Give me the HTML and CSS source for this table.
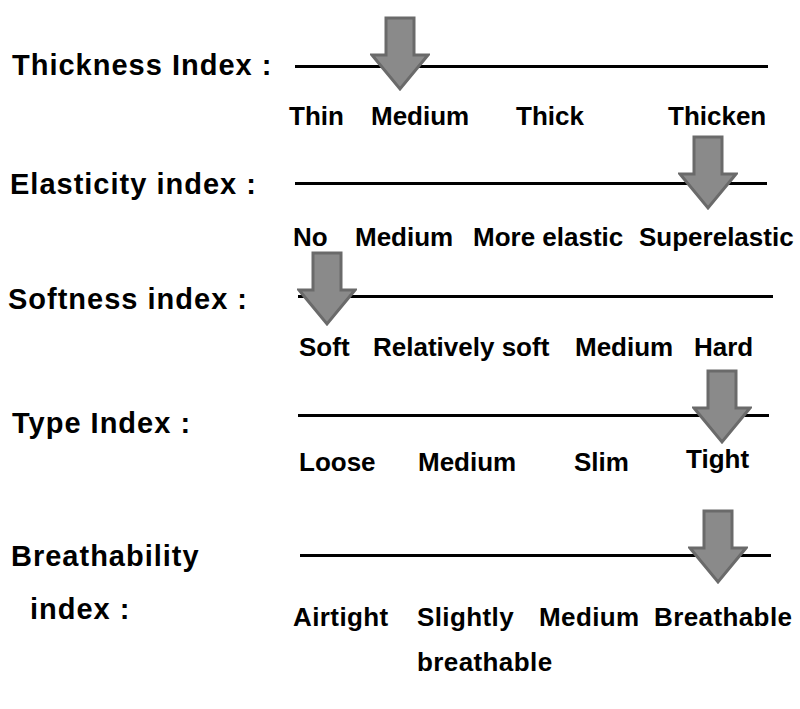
FILE: index.html
```html
<!DOCTYPE html>
<html lang="en">
<head>
<meta charset="utf-8">
<title>Fabric Index</title>
<link rel="stylesheet" href="styles.css">
</head>
<body>
<svg width="0" height="0" class="defs" aria-hidden="true">
  <symbol id="arrow" viewBox="0 0 60 76">
    <path d="M16 2 H44 V39 H58 L30 73 L2 39 H16 Z" fill="#8a8a8a" stroke="#6a6a6a" stroke-width="3" stroke-linejoin="miter"/>
  </symbol>
</svg>
<main class="chart">
  <section class="sec sec-thick">
    <div class="title">Thickness Index :</div>
    <div class="track">
      <div class="line"></div>
      <svg class="arrow"><use href="#arrow"/></svg>
    </div>
    <div class="opts">
      <span>Thin</span><span>Medium</span><span>Thick</span><span>Thicken</span>
    </div>
  </section>

  <section class="sec sec-elastic">
    <div class="title">Elasticity index :</div>
    <div class="track">
      <div class="line"></div>
      <svg class="arrow"><use href="#arrow"/></svg>
    </div>
    <div class="opts">
      <span>No</span><span>Medium</span><span>More elastic</span><span>Superelastic</span>
    </div>
  </section>

  <section class="sec sec-soft">
    <div class="title">Softness index :</div>
    <div class="track">
      <div class="line"></div>
      <svg class="arrow"><use href="#arrow"/></svg>
    </div>
    <div class="opts">
      <span>Soft</span><span>Relatively soft</span><span>Medium</span><span>Hard</span>
    </div>
  </section>

  <section class="sec sec-type">
    <div class="title">Type Index :</div>
    <div class="track">
      <div class="line"></div>
      <svg class="arrow"><use href="#arrow"/></svg>
    </div>
    <div class="opts">
      <span>Loose</span><span>Medium</span><span>Slim</span><span class="raised">Tight</span>
    </div>
  </section>

  <section class="sec sec-breath">
    <div class="title">
      <div class="t1">Breathability</div>
      <div class="t2">index :</div>
    </div>
    <div class="track">
      <div class="line"></div>
      <svg class="arrow"><use href="#arrow"/></svg>
    </div>
    <div class="opts">
      <span>Airtight</span><span>Slightly<br>breathable</span><span>Medium</span><span>Breathable</span>
    </div>
  </section>
</main>
</body>
</html>
```

FILE: styles.css
```css
html, body {
  margin: 0;
  padding: 0;
  background: #ffffff;
}

body {
  width: 800px;
  height: 709px;
  overflow: hidden;
  font-family: "Liberation Sans", Arial, sans-serif;
  font-weight: bold;
  color: #000;
}

.defs {
  position: absolute;
}

.chart {
  display: flex;
  flex-direction: column;
  padding-top: 41px;
}

.sec {
  display: grid;
  grid-template-columns: 285px 1fr;
  grid-template-rows: 50px auto;
}

.title {
  grid-column: 1;
  grid-row: 1;
  align-self: start;
  margin-top: 9px;
  font-size: 29px;
  line-height: 32px;
  letter-spacing: 1px;
  white-space: nowrap;
}

.track {
  grid-column: 2;
  grid-row: 1;
  position: relative;
  display: flex;
  align-items: center;
}

.line {
  height: 3px;
  background: #000;
  margin-left: 10px;
  width: 473px;
}

.arrow {
  position: absolute;
  width: 60px;
  height: 76px;
  top: -23px;
  left: 0;
}

.opts {
  grid-column: 2;
  grid-row: 2;
  display: grid;
  font-size: 26px;
  line-height: 30px;
  white-space: nowrap;
}

/* Thickness */
.sec-thick .title { margin-top: 8px; padding-left: 12px; }
.sec-thick .arrow { top: -25px; left: 85px; }
.sec-thick .opts {
  margin-top: 9.5px;
  padding-left: 4px;
  grid-template-columns: 82px 145px 152px auto;
}

/* Elasticity */
.sec-elastic { margin-top: 27.5px; }
.sec-elastic .title { margin-top: 10px; padding-left: 10px; }
.sec-elastic .line { width: 472px; }
.sec-elastic .arrow { top: -23px; left: 393px; }
.sec-elastic .opts {
  margin-top: 13.5px;
  padding-left: 8px;
  grid-template-columns: 62px 118px 166px auto;
}

/* Softness */
.sec-soft { margin-top: 19.5px; }
.sec-soft .title { margin-top: 12px; padding-left: 8px; }
.sec-soft .line { margin-left: 13px; width: 475px; }
.sec-soft .arrow { top: -20px; left: 12px; }
.sec-soft .opts {
  margin-top: 10.5px;
  padding-left: 14px;
  grid-template-columns: 74px 202px 119px auto;
}

/* Type */
.sec-type { margin-top: 28.5px; }
.sec-type .title { margin-top: 17px; padding-left: 12px; }
.sec-type .line { margin-left: 13px; width: 471px; }
.sec-type .arrow { top: -21px; left: 407px; }
.sec-type .opts {
  margin-top: 6.5px;
  padding-left: 14px;
  grid-template-columns: 119px 156px 112px auto;
}
.raised { margin-top: -3px; }

/* Breathability */
.sec-breath { margin-top: 53.5px; }
.sec-breath .title {
  grid-row: 1 / span 2;
  margin-top: 10px;
  padding-left: 11px;
}
.sec-breath .t2 {
  margin-top: 21px;
  padding-left: 19px;
}
.sec-breath .line { margin-left: 15px; width: 471px; }
.sec-breath .arrow { top: -21px; left: 403px; }
.sec-breath .opts {
  margin-top: 15px;
  padding-left: 8px;
  line-height: 45px;
  letter-spacing: 0.4px;
  grid-template-columns: 124px 122px 115px auto;
}
```
